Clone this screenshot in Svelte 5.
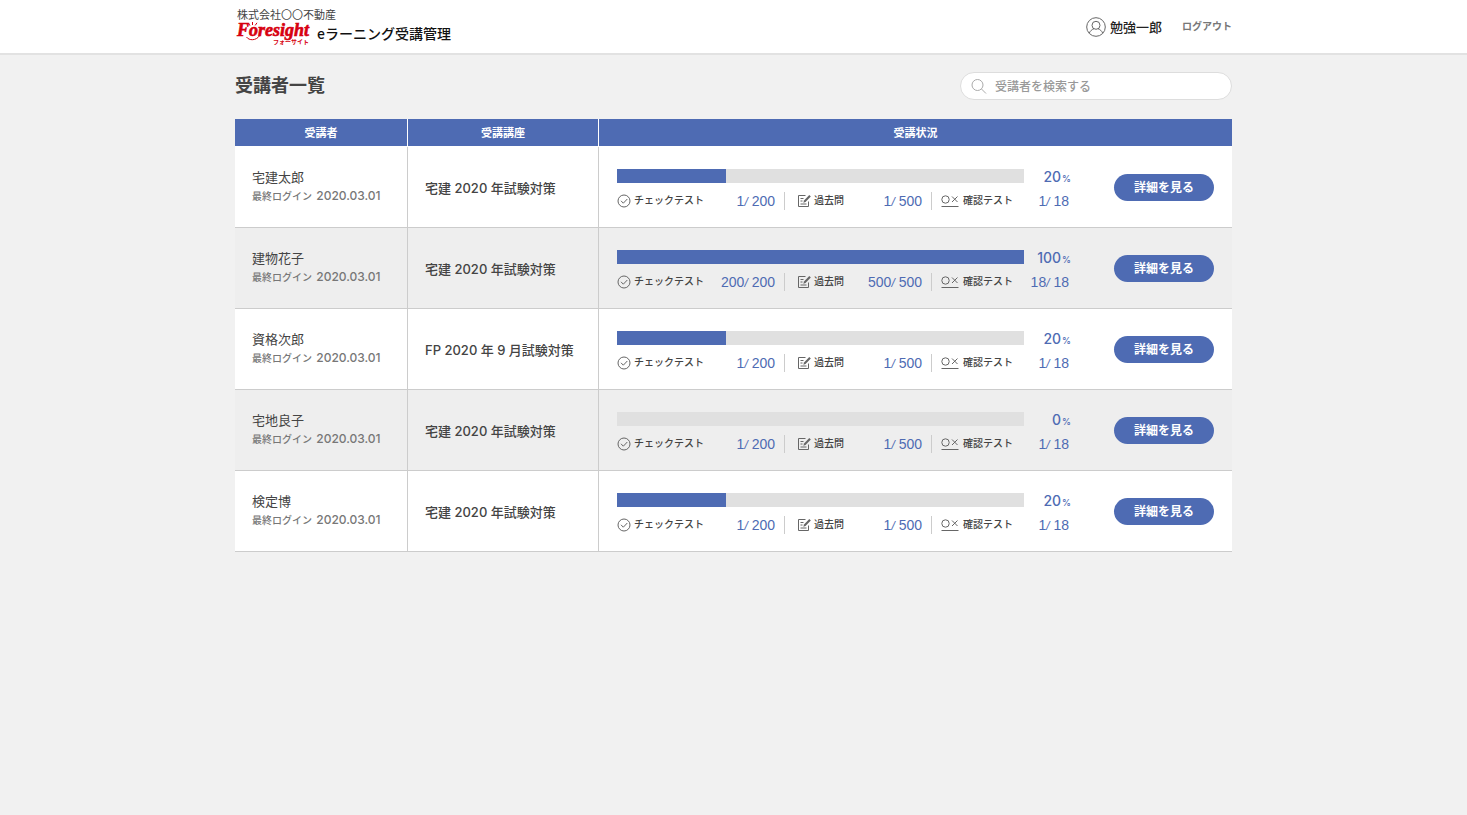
<script>
	let keyword = '';

	const students = [
		{ name: '宅建太郎', login: '2020.03.01', course: '宅建 2020 年試験対策', percent: 20, check: [1, 200], past: [1, 500], confirm: [1, 18] },
		{ name: '建物花子', login: '2020.03.01', course: '宅建 2020 年試験対策', percent: 100, check: [200, 200], past: [500, 500], confirm: [18, 18] },
		{ name: '資格次郎', login: '2020.03.01', course: 'FP 2020 年 9 月試験対策', percent: 20, check: [1, 200], past: [1, 500], confirm: [1, 18] },
		{ name: '宅地良子', login: '2020.03.01', course: '宅建 2020 年試験対策', percent: 0, check: [1, 200], past: [1, 500], confirm: [1, 18] },
		{ name: '検定博', login: '2020.03.01', course: '宅建 2020 年試験対策', percent: 20, check: [1, 200], past: [1, 500], confirm: [1, 18] }
	];

	function barWidth(percent) {
		if (percent === 0) return 0;
		return Math.min(100, percent * (4 / 3));
	}
</script>

<header class="site-header">
	<div class="container bar">
		<div class="brand">
			<p class="company">株式会社〇〇不動産</p>
			<div class="service">
				<svg class="logo" width="72" height="22" viewBox="0 0 72 22">
					<text class="logo-name" x="0" y="14">Foresight</text>
					<path d="M11.500 1l1.400 2.600M15.500 0v3M20 .8l-1.800 2.600" />
					<path d="M9.500 15c2.500 3.800 9.500 3.800 13-1.200" />
					<text class="logo-kana" x="36" y="22">フォーサイト</text>
				</svg>
				<span class="service-name">eラーニング受講管理</span>
			</div>
		</div>
		<div class="account">
			<svg width="20" height="20" viewBox="0 0 20 20">
				<circle cx="10" cy="10" r="9.300" />
				<circle cx="10" cy="8.300" r="4" />
				<path d="M3.200 16.200c1-2.200 2.800-3.800 4.800-4.500M16.800 16.200c-1-2.200-2.800-3.800-4.800-4.500" />
			</svg>
			<span class="user">勉強一郎</span>
			<a class="logout" href="#logout">ログアウト</a>
		</div>
	</div>
</header>

<main class="container">
	<div class="page-head">
		<h1>受講者一覧</h1>
		<label class="search">
			<svg width="16" height="16" viewBox="0 0 16 16">
				<circle cx="6.500" cy="7" r="5.500" />
				<path d="M10.500 11L15 15.500" />
			</svg>
			<input type="search" aria-label="受講者を検索する" placeholder="受講者を検索する" bind:value={keyword} />
		</label>
	</div>

	<table>
		<thead>
			<tr>
				<th class="col-student">受講者</th>
				<th class="col-course">受講講座</th>
				<th>受講状況</th>
			</tr>
		</thead>
		<tbody>
			{#each students as s}
				<tr>
					<td class="student">
						<p class="name">{s.name}</p>
						<p class="login">最終ログイン <span>{s.login}</span></p>
					</td>
					<td class="course">{s.course}</td>
					<td>
						<div class="status">
							<div class="progress">
								<div class="meter">
									<div class="track">
										<div class="fill" style="width: {barWidth(s.percent)}%"></div>
									</div>
									<p class="percent">{s.percent}<small>%</small></p>
								</div>
								<div class="stats">
									<div class="stat">
										<svg width="14" height="14" viewBox="0 0 14 14">
											<circle cx="7" cy="7" r="6" />
											<path d="M4 6.800l2.300 2.400 4-4.200" />
										</svg>
										<span class="label">チェックテスト</span>
										<span class="count">{s.check[0]}<i>/</i> {s.check[1]}</span>
									</div>
									<div class="stat">
										<svg width="14" height="14" viewBox="0 0 14 14">
											<path d="M8.500 1.500h-7v11h10V7.500" />
											<path d="M3.500 4.500h3M3.500 7h2M3.500 10h6" />
											<path class="pen" d="M6.300 8.800l.7-2.300 5.300-5.500 1.500 1.500-5.300 5.500z" />
										</svg>
										<span class="label">過去問</span>
										<span class="count">{s.past[0]}<i>/</i> {s.past[1]}</span>
									</div>
									<div class="stat">
										<svg width="18" height="14" viewBox="0 0 18 14">
											<circle cx="4.500" cy="5.500" r="3.700" />
											<path d="M11 2.500l5.500 5.500M16.500 2.500L11 8M.5 12.500h17" />
										</svg>
										<span class="label">確認テスト</span>
										<span class="count">{s.confirm[0]}<i>/</i> {s.confirm[1]}</span>
									</div>
								</div>
							</div>
							<button type="button">詳細を見る</button>
						</div>
					</td>
				</tr>
			{/each}
		</tbody>
	</table>
</main>

<style>
	:global(body) {
		background: #f1f1f1;
		color: #444;
		font-family: 'Noto Sans CJK JP', sans-serif;
	}

	p,
	h1 {
		margin: 0;
	}

	svg {
		flex: none;
		fill: none;
		stroke: #666;
	}

	.container {
		max-width: 997px;
		margin: 0 auto;
	}

	.site-header {
		background: #fff;
		border-bottom: 2px solid #e2e2e2;
	}

	.bar {
		display: flex;
		justify-content: space-between;
		align-items: center;
		height: 53px;
	}

	.brand {
		padding: 0 2px 4px;
	}

	.company {
		font-size: 11px;
		line-height: 16px;
	}

	.service {
		display: flex;
		align-items: center;
		gap: 8px;
	}

	.logo {
		overflow: visible;
		stroke: #d7000f;
	}

	.logo text {
		fill: #d7000f;
		font-weight: bold;
	}

	.logo-name {
		font-family: 'Liberation Serif', serif;
		font-style: italic;
		font-size: 18px;
		stroke-width: 0.6;
	}

	.logo-kana {
		font-size: 6px;
		stroke: none;
	}

	.service-name {
		color: #111;
		font-size: 14px;
		font-weight: 500;
		line-height: 22px;
	}

	.account {
		display: flex;
		align-items: center;
		gap: 4px;
	}

	.user {
		color: #222;
		font-size: 13px;
		font-weight: 500;
		line-height: 20px;
	}

	.logout {
		margin-left: 16px;
		padding-bottom: 2px;
		color: #777;
		font-size: 10px;
		font-weight: bold;
		text-decoration: none;
	}

	.page-head {
		display: flex;
		justify-content: space-between;
		align-items: flex-start;
		padding: 17px 0 19px;
	}

	h1 {
		font-size: 18px;
		font-weight: bold;
		line-height: 24px;
	}

	.search {
		display: flex;
		align-items: center;
		gap: 8px;
		box-sizing: border-box;
		width: 272px;
		height: 28px;
		padding: 0 10px;
		background: #fff;
		border: 1px solid #ddd;
		border-radius: 14px;
	}

	.search svg {
		stroke: #aaa;
	}

	.search input {
		flex: 1;
		min-width: 0;
		padding: 0 0 2px;
		border: 0;
		outline: 0;
		background: none;
		font-family: inherit;
		font-size: 12px;
		font-weight: 500;
	}

	.search input::placeholder {
		color: #999;
	}

	table {
		width: 100%;
		table-layout: fixed;
		border-spacing: 0;
	}

	th {
		box-sizing: border-box;
		height: 28px;
		padding: 0 0 2px;
		background: #4e6bb3;
		border-right: 1px solid #fff;
		border-bottom: 1px solid #fff;
		color: #fff;
		font-size: 11px;
		line-height: 16px;
	}

	.col-student {
		width: 173px;
	}

	.col-course {
		width: 191px;
	}

	td {
		padding: 0;
		background: #fff;
		border-right: 1px solid #ccc;
		border-bottom: 1px solid #ccc;
	}

	th:last-child,
	td:last-child {
		border-right: 0;
	}

	tbody tr:nth-child(even) td {
		background: #eee;
	}

	.student,
	.course {
		padding-left: 17px;
	}

	.student {
		padding-bottom: 3px;
	}

	.name {
		font-size: 13px;
		line-height: 20px;
	}

	.login {
		color: #777;
		font-size: 10px;
		font-weight: 500;
		line-height: 18px;
		white-space: nowrap;
	}

	.login span {
		margin-left: 2px;
		font-family: Inter, sans-serif;
		font-size: 12px;
	}

	.course {
		font-family: Inter, 'Noto Sans CJK JP', sans-serif;
		font-size: 13px;
		font-weight: 500;
	}

	.status {
		display: flex;
		align-items: center;
		gap: 43px;
		padding: 0 18px;
	}

	.progress {
		flex: 1;
		padding: 22px 0 17px;
	}

	.meter {
		display: flex;
		align-items: center;
		height: 14px;
	}

	.track {
		flex: 1;
		height: 14px;
		background: #e0e0e0;
	}

	.fill {
		height: 100%;
		background: #4e6bb3;
	}

	.percent {
		width: 47px;
		color: #4e6bb3;
		font-family: Inter, sans-serif;
		font-size: 14px;
		font-weight: 500;
		text-align: right;
	}

	.percent small {
		margin-left: 1px;
		font-size: 9px;
	}

	.stats {
		display: grid;
		grid-template-columns: 168fr 147fr 139fr;
		margin-top: 9px;
	}

	.stat {
		display: flex;
		align-items: center;
		gap: 3px;
		height: 18px;
		padding: 0 9px 0 12px;
		border-right: 1px solid #ccc;
	}

	.stat:first-child {
		padding-left: 0;
	}

	.stat:last-child {
		gap: 4px;
		padding: 0 2px 0 9px;
		border-right: 0;
	}

	.pen {
		fill: #666;
		stroke: none;
	}

	.label {
		padding-bottom: 2px;
		font-size: 10px;
		font-weight: 500;
		line-height: 16px;
		white-space: nowrap;
	}

	.count {
		margin-left: auto;
		color: #4e6bb3;
		font-family: 'Liberation Sans', sans-serif;
		font-size: 14px;
		white-space: nowrap;
	}

	.count i {
		font-size: 12px;
	}

	button {
		width: 100px;
		height: 27px;
		padding: 0 0 2px;
		background: #4e6bb3;
		border: 0;
		border-radius: 14px;
		color: #fff;
		font-family: inherit;
		font-size: 12px;
		font-weight: bold;
		cursor: pointer;
	}
</style>
